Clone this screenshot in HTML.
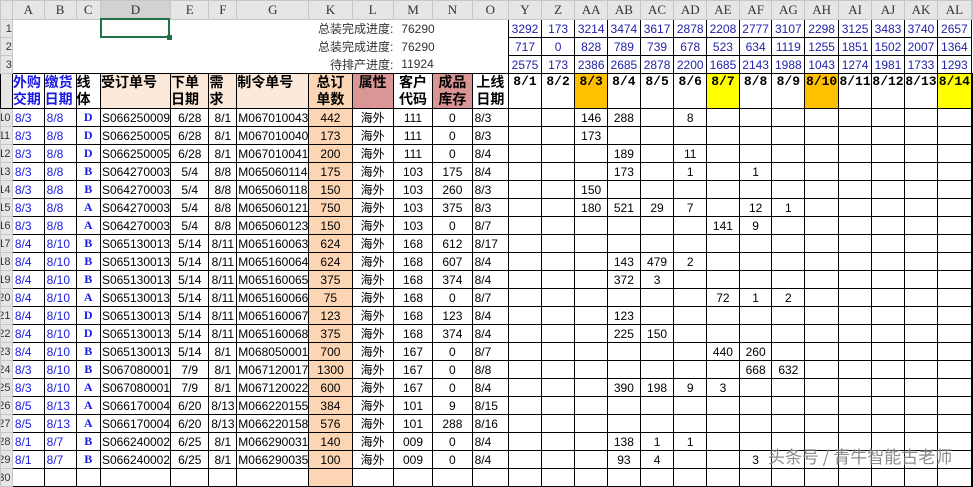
<!DOCTYPE html>
<html><head><meta charset="utf-8">
<style>
*{margin:0;padding:0;box-sizing:border-box}
body{width:973px;height:472px;overflow:hidden;background:#fff;font-family:"Liberation Sans","Noto Sans CJK SC",sans-serif;font-size:12px;color:#000;position:relative}
table{border-collapse:collapse;table-layout:fixed;position:absolute;left:0;top:0}
td{padding:0;overflow:hidden;white-space:nowrap;vertical-align:middle}
tr.ch td{height:19px;background:#e6e6e6;border:1px solid #c6c6c6;text-align:center;font-family:"Liberation Serif",serif;font-size:13px;color:#333}
tr.ch td.sel{background:#d2d2d2}
td.rh{background:#e6e6e6;border:1px solid #c6c6c6;color:#333;text-align:right;font-size:11px;text-indent:-4px}
tr.t td{height:18px}
tr.t td.n{border:1px solid #000;color:#2222aa;text-align:center}
tr.t td.lab{text-align:right;font-size:12px;color:#333}
tr.t td.val{text-align:left;padding-left:8px;color:#333}
tr.h td{height:35px;border:1px solid #000;vertical-align:top;font-weight:bold;font-size:14px;line-height:17px;font-family:"Liberation Sans","Noto Sans CJK SC",sans-serif}
tr.h td.bl{color:#1a1ae6}
tr.h td.pk{background:#fde9d9}
tr.h td.pe{background:#fcd5b4;text-align:center}
tr.h td.ro{background:#da9694;text-align:center}
tr.h td.c{text-align:center}
tr.h td.dt{font-family:"Liberation Mono",monospace;font-size:13px;text-align:center;line-height:16px}
tr.h td.or{background:#ffc000}
tr.h td.ye{background:#ffff00}
tr.d td{height:18px;border:1px solid #000;text-align:center}
tr.d td.rh{border:1px solid #c6c6c6}
tr.d td.a{text-align:left;color:#1a1ae6;padding-left:2px}
tr.d td.l{color:#1a1ae6;font-weight:bold;font-family:"Liberation Serif",serif}
tr.d td.s{text-align:left;padding-left:1px}
tr.d td.k{background:#fcd5b4}
tr.d td.o{text-align:left;padding-left:2px}
#selbox{position:absolute;left:100px;top:18px;width:70px;height:20px;border:2px solid #217346}
#selbox:after{content:"";position:absolute;right:-4px;bottom:-4px;width:5px;height:5px;background:#217346}
#wm{position:absolute;left:768px;top:445px;font-size:17px;line-height:22px;white-space:nowrap;color:#777;opacity:.85;font-family:"Noto Sans CJK SC",sans-serif;text-shadow:0 0 2px #fff}
</style></head><body>
<table>
<colgroup>
<col style="width:12px"><col style="width:32px"><col style="width:32px"><col style="width:25px"><col style="width:67px"><col style="width:39px"><col style="width:28px"><col style="width:68px"><col style="width:44px"><col style="width:42px"><col style="width:40px"><col style="width:40px"><col style="width:37px"><col style="width:33px"><col style="width:34px"><col style="width:33px"><col style="width:33px"><col style="width:34px"><col style="width:33px"><col style="width:33px"><col style="width:33px"><col style="width:33px"><col style="width:34px"><col style="width:33px"><col style="width:33px"><col style="width:33px"><col style="width:34px"><col style="width:1px">
</colgroup>
<tr class="ch"><td></td><td>A</td><td>B</td><td>C</td><td class="sel">D</td><td>E</td><td>F</td><td>G</td><td>K</td><td>L</td><td>M</td><td>N</td><td>O</td><td>Y</td><td>Z</td><td>AA</td><td>AB</td><td>AC</td><td>AD</td><td>AE</td><td>AF</td><td>AG</td><td>AH</td><td>AI</td><td>AJ</td><td>AK</td><td>AL</td><td></td></tr>
<tr class="t"><td class="rh">1</td><td colspan="6"></td><td colspan="3" class="lab">总装完成进度:</td><td colspan="2" class="val">76290</td><td></td><td class="n">3292</td><td class="n">173</td><td class="n">3214</td><td class="n">3474</td><td class="n">3617</td><td class="n">2878</td><td class="n">2208</td><td class="n">2777</td><td class="n">3107</td><td class="n">2298</td><td class="n">3125</td><td class="n">3483</td><td class="n">3740</td><td class="n">2657</td><td></td></tr>
<tr class="t"><td class="rh">2</td><td colspan="6"></td><td colspan="3" class="lab">总装完成进度:</td><td colspan="2" class="val">76290</td><td></td><td class="n">717</td><td class="n">0</td><td class="n">828</td><td class="n">789</td><td class="n">739</td><td class="n">678</td><td class="n">523</td><td class="n">634</td><td class="n">1119</td><td class="n">1255</td><td class="n">1851</td><td class="n">1502</td><td class="n">2007</td><td class="n">1364</td><td></td></tr>
<tr class="t"><td class="rh">3</td><td colspan="6"></td><td colspan="3" class="lab">待排产进度:</td><td colspan="2" class="val">11924</td><td></td><td class="n">2575</td><td class="n">173</td><td class="n">2386</td><td class="n">2685</td><td class="n">2878</td><td class="n">2200</td><td class="n">1685</td><td class="n">2143</td><td class="n">1988</td><td class="n">1043</td><td class="n">1274</td><td class="n">1981</td><td class="n">1733</td><td class="n">1293</td><td></td></tr>
<tr class="h"><td class="rh"></td><td class="bl">外购<br>交期</td><td class="bl">缴货<br>日期</td><td>线<br>体</td><td class="pk">受订单号</td><td class="pk">下单<br>日期</td><td class="pk">需<br>求</td><td class="pk">制令单号</td><td class="pe">总订<br>单数</td><td class="ro">属性</td><td class="c">客户<br>代码</td><td class="ro">成品<br>库存</td><td class="c">上线<br>日期</td><td class="dt">8/1</td><td class="dt">8/2</td><td class="dt or">8/3</td><td class="dt">8/4</td><td class="dt">8/5</td><td class="dt">8/6</td><td class="dt ye">8/7</td><td class="dt">8/8</td><td class="dt">8/9</td><td class="dt or">8/10</td><td class="dt">8/11</td><td class="dt">8/12</td><td class="dt">8/13</td><td class="dt ye">8/14</td><td></td></tr>
<tr class="d"><td class="rh">10</td><td class="a">8/3</td><td class="a">8/8</td><td class="l">D</td><td class="s">S066250009</td><td>6/28</td><td>8/1</td><td class="s">M067010043</td><td class="k">442</td><td>海外</td><td>111</td><td>0</td><td class="o">8/3</td><td></td><td></td><td>146</td><td>288</td><td></td><td>8</td><td></td><td></td><td></td><td></td><td></td><td></td><td></td><td></td><td></td></tr>
<tr class="d"><td class="rh">11</td><td class="a">8/3</td><td class="a">8/8</td><td class="l">D</td><td class="s">S066250005</td><td>6/28</td><td>8/1</td><td class="s">M067010040</td><td class="k">173</td><td>海外</td><td>111</td><td>0</td><td class="o">8/3</td><td></td><td></td><td>173</td><td></td><td></td><td></td><td></td><td></td><td></td><td></td><td></td><td></td><td></td><td></td><td></td></tr>
<tr class="d"><td class="rh">12</td><td class="a">8/3</td><td class="a">8/8</td><td class="l">D</td><td class="s">S066250005</td><td>6/28</td><td>8/1</td><td class="s">M067010041</td><td class="k">200</td><td>海外</td><td>111</td><td>0</td><td class="o">8/4</td><td></td><td></td><td></td><td>189</td><td></td><td>11</td><td></td><td></td><td></td><td></td><td></td><td></td><td></td><td></td><td></td></tr>
<tr class="d"><td class="rh">13</td><td class="a">8/3</td><td class="a">8/8</td><td class="l">B</td><td class="s">S064270003</td><td>5/4</td><td>8/8</td><td class="s">M065060114</td><td class="k">175</td><td>海外</td><td>103</td><td>175</td><td class="o">8/4</td><td></td><td></td><td></td><td>173</td><td></td><td>1</td><td></td><td>1</td><td></td><td></td><td></td><td></td><td></td><td></td><td></td></tr>
<tr class="d"><td class="rh">14</td><td class="a">8/3</td><td class="a">8/8</td><td class="l">B</td><td class="s">S064270003</td><td>5/4</td><td>8/8</td><td class="s">M065060118</td><td class="k">150</td><td>海外</td><td>103</td><td>260</td><td class="o">8/3</td><td></td><td></td><td>150</td><td></td><td></td><td></td><td></td><td></td><td></td><td></td><td></td><td></td><td></td><td></td><td></td></tr>
<tr class="d"><td class="rh">15</td><td class="a">8/3</td><td class="a">8/8</td><td class="l">A</td><td class="s">S064270003</td><td>5/4</td><td>8/8</td><td class="s">M065060121</td><td class="k">750</td><td>海外</td><td>103</td><td>375</td><td class="o">8/3</td><td></td><td></td><td>180</td><td>521</td><td>29</td><td>7</td><td></td><td>12</td><td>1</td><td></td><td></td><td></td><td></td><td></td><td></td></tr>
<tr class="d"><td class="rh">16</td><td class="a">8/3</td><td class="a">8/8</td><td class="l">A</td><td class="s">S064270003</td><td>5/4</td><td>8/8</td><td class="s">M065060123</td><td class="k">150</td><td>海外</td><td>103</td><td>0</td><td class="o">8/7</td><td></td><td></td><td></td><td></td><td></td><td></td><td>141</td><td>9</td><td></td><td></td><td></td><td></td><td></td><td></td><td></td></tr>
<tr class="d"><td class="rh">17</td><td class="a">8/4</td><td class="a">8/10</td><td class="l">B</td><td class="s">S065130013</td><td>5/14</td><td>8/11</td><td class="s">M065160063</td><td class="k">624</td><td>海外</td><td>168</td><td>612</td><td class="o">8/17</td><td></td><td></td><td></td><td></td><td></td><td></td><td></td><td></td><td></td><td></td><td></td><td></td><td></td><td></td><td></td></tr>
<tr class="d"><td class="rh">18</td><td class="a">8/4</td><td class="a">8/10</td><td class="l">B</td><td class="s">S065130013</td><td>5/14</td><td>8/11</td><td class="s">M065160064</td><td class="k">624</td><td>海外</td><td>168</td><td>607</td><td class="o">8/4</td><td></td><td></td><td></td><td>143</td><td>479</td><td>2</td><td></td><td></td><td></td><td></td><td></td><td></td><td></td><td></td><td></td></tr>
<tr class="d"><td class="rh">19</td><td class="a">8/4</td><td class="a">8/10</td><td class="l">B</td><td class="s">S065130013</td><td>5/14</td><td>8/11</td><td class="s">M065160065</td><td class="k">375</td><td>海外</td><td>168</td><td>374</td><td class="o">8/4</td><td></td><td></td><td></td><td>372</td><td>3</td><td></td><td></td><td></td><td></td><td></td><td></td><td></td><td></td><td></td><td></td></tr>
<tr class="d"><td class="rh">20</td><td class="a">8/4</td><td class="a">8/10</td><td class="l">A</td><td class="s">S065130013</td><td>5/14</td><td>8/11</td><td class="s">M065160066</td><td class="k">75</td><td>海外</td><td>168</td><td>0</td><td class="o">8/7</td><td></td><td></td><td></td><td></td><td></td><td></td><td>72</td><td>1</td><td>2</td><td></td><td></td><td></td><td></td><td></td><td></td></tr>
<tr class="d"><td class="rh">21</td><td class="a">8/4</td><td class="a">8/10</td><td class="l">D</td><td class="s">S065130013</td><td>5/14</td><td>8/11</td><td class="s">M065160067</td><td class="k">123</td><td>海外</td><td>168</td><td>123</td><td class="o">8/4</td><td></td><td></td><td></td><td>123</td><td></td><td></td><td></td><td></td><td></td><td></td><td></td><td></td><td></td><td></td><td></td></tr>
<tr class="d"><td class="rh">22</td><td class="a">8/4</td><td class="a">8/10</td><td class="l">D</td><td class="s">S065130013</td><td>5/14</td><td>8/11</td><td class="s">M065160068</td><td class="k">375</td><td>海外</td><td>168</td><td>374</td><td class="o">8/4</td><td></td><td></td><td></td><td>225</td><td>150</td><td></td><td></td><td></td><td></td><td></td><td></td><td></td><td></td><td></td><td></td></tr>
<tr class="d"><td class="rh">23</td><td class="a">8/4</td><td class="a">8/10</td><td class="l">B</td><td class="s">S065130013</td><td>5/14</td><td>8/1</td><td class="s">M068050001</td><td class="k">700</td><td>海外</td><td>167</td><td>0</td><td class="o">8/7</td><td></td><td></td><td></td><td></td><td></td><td></td><td>440</td><td>260</td><td></td><td></td><td></td><td></td><td></td><td></td><td></td></tr>
<tr class="d"><td class="rh">24</td><td class="a">8/3</td><td class="a">8/10</td><td class="l">B</td><td class="s">S067080001</td><td>7/9</td><td>8/1</td><td class="s">M067120017</td><td class="k">1300</td><td>海外</td><td>167</td><td>0</td><td class="o">8/8</td><td></td><td></td><td></td><td></td><td></td><td></td><td></td><td>668</td><td>632</td><td></td><td></td><td></td><td></td><td></td><td></td></tr>
<tr class="d"><td class="rh">25</td><td class="a">8/3</td><td class="a">8/10</td><td class="l">A</td><td class="s">S067080001</td><td>7/9</td><td>8/1</td><td class="s">M067120022</td><td class="k">600</td><td>海外</td><td>167</td><td>0</td><td class="o">8/4</td><td></td><td></td><td></td><td>390</td><td>198</td><td>9</td><td>3</td><td></td><td></td><td></td><td></td><td></td><td></td><td></td><td></td></tr>
<tr class="d"><td class="rh">26</td><td class="a">8/5</td><td class="a">8/13</td><td class="l">A</td><td class="s">S066170004</td><td>6/20</td><td>8/13</td><td class="s">M066220155</td><td class="k">384</td><td>海外</td><td>101</td><td>9</td><td class="o">8/15</td><td></td><td></td><td></td><td></td><td></td><td></td><td></td><td></td><td></td><td></td><td></td><td></td><td></td><td></td><td></td></tr>
<tr class="d"><td class="rh">27</td><td class="a">8/5</td><td class="a">8/13</td><td class="l">A</td><td class="s">S066170004</td><td>6/20</td><td>8/13</td><td class="s">M066220158</td><td class="k">576</td><td>海外</td><td>101</td><td>288</td><td class="o">8/16</td><td></td><td></td><td></td><td></td><td></td><td></td><td></td><td></td><td></td><td></td><td></td><td></td><td></td><td></td><td></td></tr>
<tr class="d"><td class="rh">28</td><td class="a">8/1</td><td class="a">8/7</td><td class="l">B</td><td class="s">S066240002</td><td>6/25</td><td>8/1</td><td class="s">M066290031</td><td class="k">140</td><td>海外</td><td>009</td><td>0</td><td class="o">8/4</td><td></td><td></td><td></td><td>138</td><td>1</td><td>1</td><td></td><td></td><td></td><td></td><td></td><td></td><td></td><td></td><td></td></tr>
<tr class="d"><td class="rh">29</td><td class="a">8/1</td><td class="a">8/7</td><td class="l">B</td><td class="s">S066240002</td><td>6/25</td><td>8/1</td><td class="s">M066290035</td><td class="k">100</td><td>海外</td><td>009</td><td>0</td><td class="o">8/4</td><td></td><td></td><td></td><td>93</td><td>4</td><td></td><td></td><td>3</td><td></td><td></td><td></td><td></td><td></td><td></td><td></td></tr>
<tr class="d"><td class="rh">30</td><td></td><td></td><td></td><td></td><td></td><td></td><td></td><td class="k"></td><td></td><td></td><td></td><td></td><td></td><td></td><td></td><td></td><td></td><td></td><td></td><td></td><td></td><td></td><td></td><td></td><td></td><td></td><td></td></tr>
</table>
<div id="selbox"></div>
<div id="wm">头条号 / 青牛智能古老师</div>
</body></html>
